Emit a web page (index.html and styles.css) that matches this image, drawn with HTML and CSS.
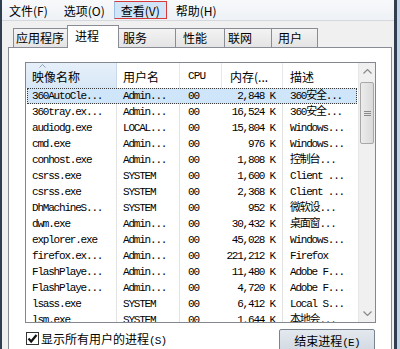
FILE: index.html
```html
<!DOCTYPE html>
<html>
<head>
<meta charset="utf-8">
<link rel="stylesheet" href="styles.css">
</head>
<body>
<div class="outer">
<div class="win">
  <div class="menubar">
    <span class="mi">文件(F)</span>
    <span class="mi">选项(O)</span>
    <span class="mi mi-hot">查看(V)</span>
    <span class="mi">帮助(H)</span>
  </div>
  <div class="tabs">
    <div class="tab t1">应用程序</div>
    <div class="tab t2 sel">进程</div>
    <div class="tab t3">服务</div>
    <div class="tab t4">性能</div>
    <div class="tab t5">联网</div>
    <div class="tab t6">用户</div>
  </div>
  <div class="panel">
    <div class="list">
      <div class="lv">
        <div class="hdr">
          <div class="hc c-name sorted"><svg class="sort" width="7" height="4" viewBox="0 0 7 4"><path d="M0.5 3.5 L3.5 0.5 L6.5 3.5" fill="none" stroke="#8fa3b8" stroke-width="1"/></svg>映像名称</div>
          <div class="hc c-user">用户名</div>
          <div class="hc c-cpu">CPU</div>
          <div class="hc c-mem">内存(...</div>
          <div class="hc c-desc">描述</div>
        </div>
        <div class="row selrow"><div class="c c-name">360AutoCle...</div><div class="c c-user">Admin...</div><div class="c c-cpu">00</div><div class="c c-mem">2,848 K</div><div class="c c-desc">360安全...</div></div>
        <div class="row"><div class="c c-name">360tray.ex...</div><div class="c c-user">Admin...</div><div class="c c-cpu">00</div><div class="c c-mem">16,524 K</div><div class="c c-desc">360安全...</div></div>
        <div class="row"><div class="c c-name">audiodg.exe</div><div class="c c-user">LOCAL...</div><div class="c c-cpu">00</div><div class="c c-mem">15,804 K</div><div class="c c-desc">Windows...</div></div>
        <div class="row"><div class="c c-name">cmd.exe</div><div class="c c-user">Admin...</div><div class="c c-cpu">00</div><div class="c c-mem">976 K</div><div class="c c-desc">Windows...</div></div>
        <div class="row"><div class="c c-name">conhost.exe</div><div class="c c-user">Admin...</div><div class="c c-cpu">00</div><div class="c c-mem">1,808 K</div><div class="c c-desc">控制台...</div></div>
        <div class="row"><div class="c c-name">csrss.exe</div><div class="c c-user">SYSTEM</div><div class="c c-cpu">00</div><div class="c c-mem">1,600 K</div><div class="c c-desc">Client ...</div></div>
        <div class="row"><div class="c c-name">csrss.exe</div><div class="c c-user">SYSTEM</div><div class="c c-cpu">00</div><div class="c c-mem">2,368 K</div><div class="c c-desc">Client ...</div></div>
        <div class="row"><div class="c c-name">DhMachineS...</div><div class="c c-user">SYSTEM</div><div class="c c-cpu">00</div><div class="c c-mem">952 K</div><div class="c c-desc">微软设...</div></div>
        <div class="row"><div class="c c-name">dwm.exe</div><div class="c c-user">Admin...</div><div class="c c-cpu">00</div><div class="c c-mem">30,432 K</div><div class="c c-desc">桌面窗...</div></div>
        <div class="row"><div class="c c-name">explorer.exe</div><div class="c c-user">Admin...</div><div class="c c-cpu">00</div><div class="c c-mem">45,028 K</div><div class="c c-desc">Windows...</div></div>
        <div class="row"><div class="c c-name">firefox.ex...</div><div class="c c-user">Admin...</div><div class="c c-cpu">00</div><div class="c c-mem">221,212 K</div><div class="c c-desc">Firefox</div></div>
        <div class="row"><div class="c c-name">FlashPlaye...</div><div class="c c-user">Admin...</div><div class="c c-cpu">00</div><div class="c c-mem">11,480 K</div><div class="c c-desc">Adobe F...</div></div>
        <div class="row"><div class="c c-name">FlashPlaye...</div><div class="c c-user">Admin...</div><div class="c c-cpu">00</div><div class="c c-mem">4,720 K</div><div class="c c-desc">Adobe F...</div></div>
        <div class="row"><div class="c c-name">lsass.exe</div><div class="c c-user">SYSTEM</div><div class="c c-cpu">00</div><div class="c c-mem">6,412 K</div><div class="c c-desc">Local S...</div></div>
        <div class="row"><div class="c c-name">lsm.exe</div><div class="c c-user">SYSTEM</div><div class="c c-cpu">00</div><div class="c c-mem">1,644 K</div><div class="c c-desc">本地会...</div></div>
      </div>
      <div class="vs">
        <div class="vs-btn"><svg width="9" height="5" viewBox="0 0 9 5"><path d="M0.5 4.5 L4.5 0.5 L8.5 4.5" fill="none" stroke="#8a8a8a" stroke-width="1.2"/></svg></div>
        <div class="vs-track">
          <div class="vs-thumb"><svg width="7" height="7" viewBox="0 0 7 7"><path d="M0 1.5 H7 M0 3.5 H7 M0 5.5 H7" stroke="#8a8a8a" stroke-width="1"/></svg></div>
        </div>
        <div class="vs-btn"><svg width="9" height="5" viewBox="0 0 9 5"><path d="M0.5 0.5 L4.5 4.5 L8.5 0.5" fill="none" stroke="#8a8a8a" stroke-width="1.2"/></svg></div>
      </div>
    </div>
    <div class="bottom">
      <div class="chk">
        <span class="box"><svg width="11" height="11" viewBox="0 0 11 11"><path d="M1.5 5.5 L4.2 8.5 L9.5 2" fill="none" stroke="#111" stroke-width="2.2"/></svg></span>
        <span class="chk-label">显示所有用户的进程<span class="mono">(S)</span></span>
      </div>
      <div class="btn">结束进程<span class="mono">(E)</span></div>
    </div>
  </div>
</div>
</div>
</body>
</html>
```

FILE: styles.css
```css
* { box-sizing: border-box; }
html, body { margin: 0; padding: 0; }
body {
  width: 400px;
  height: 349px;
  overflow: hidden;
  background: #f0f0f0;
  font-family: "Noto Sans CJK SC", "Noto Sans", sans-serif;
  font-size: 12px;
  color: #000;
}
.outer {
  height: 349px;
  border-right: 3px solid #c3d4e6;
}
.win {
  height: 349px;
  border-left: 2px solid #2f3f50;
  border-right: 3px solid #2f3f50;
  background: #f0f0f0;
  overflow: hidden;
}
.menubar {
  height: 21px;
  display: flex;
  gap: 2px;
  background: linear-gradient(#f8f9fb, #eef1f5);
  border-bottom: 1px solid #d5d9de;
}
.mi {
  height: 18px;
  margin-top: 1px;
  padding: 0 6px;
  line-height: 17px;
  border: 1px solid transparent;
  white-space: nowrap;
}
.mi-hot {
  background: #d2e5f8;
  border-color: #d8393a;
  border-left-color: #9cc0e4;
}
.tabs {
  display: flex;
  align-items: flex-end;
  height: 22px;
  margin-top: 4px;
  padding-left: 11px;
}
.tab {
  height: 19px;
  border: 1px solid #898c95;
  border-bottom: none;
  margin-right: -1px;
  background: linear-gradient(#f3f3f3, #e4e4e4);
  line-height: 18px;
  white-space: nowrap;
}
.tab.sel {
  position: relative;
  z-index: 1;
  height: 23px;
  margin-bottom: -1px;
  margin-left: -1px;
  margin-right: -2px;
  background: #fff;
  line-height: 19px;
}
.t1 { width: 56px; padding-left: 2px; }
.t2 { width: 52px; padding-left: 7px; }
.t3 { width: 59px; padding-left: 5px; }
.t4 { width: 50px; padding-left: 7px; }
.t5 { width: 48px; padding-left: 3px; }
.t6 { width: 47px; padding-left: 6px; }
.panel {
  margin-left: 6px;
  width: 384px;
  height: 330px;
  border: 1px solid #898c95;
  background: #fff;
  padding: 14px 0 0 16px;
}
.list {
  width: 351px;
  height: 261px;
  border: 1px solid #828790;
  display: flex;
  background: #fff;
}
.lv {
  width: 332px;
  height: 259px;
  overflow: hidden;
}
.hdr {
  display: flex;
  height: 25px;
}
.hc {
  position: relative;
  height: 25px;
  line-height: 25px;
  padding-top: 1px;
  white-space: nowrap;
  border-right: 1px solid #e5e8ec;
}
.hc.sorted {
  background: linear-gradient(#e6f0fa, #d8e7f6);
  border-right-color: #c9d8e8;
}
.sort {
  position: absolute;
  left: 13px;
  top: 1px;
}
.c-name { width: 91px; padding-left: 6px; }
.c-user { width: 63px; padding-left: 6px; }
.c-cpu { width: 42px; padding-left: 8px; }
.c-mem { width: 61px; padding-left: 8px; }
.c-desc { width: 75px; padding-left: 7px; border-right: none; }
.hc.c-cpu { font-family: "Liberation Mono", monospace; font-size: 11px; letter-spacing: -0.8px; }
.row {
  display: flex;
  height: 16px;
  font-family: "Liberation Mono", "Noto Sans CJK SC", monospace;
  font-size: 11px;
  letter-spacing: -1.2px;
  line-height: 16px;
}
.row .c {
  white-space: nowrap;
  overflow: hidden;
}
.row .c-name { border-right: 1px solid #e3e3e3; }
.row .c-user { border-right: 1px solid #e3e3e3; }
.row .c-mem { border-right: 1px solid #e3e3e3; text-align: right; padding-left: 0; padding-right: 7px; }
.row .c-desc { padding-left: 7px; }
.selrow {
  margin-left: 1px;
  width: 330px;
  background: #cfe6fa;
  outline: 1px dotted #3a3a3a;
  outline-offset: -1px;
}
.selrow .c-name { width: 90px; padding-left: 5px; border-right-color: transparent; }
.selrow .c-user, .selrow .c-mem { border-right-color: transparent; }
.selrow .c-desc { width: 74px; }
.vs {
  width: 17px;
  height: 259px;
  display: flex;
  flex-direction: column;
  background: #f0f0f0;
  border-left: 1px solid #e6e6e6;
}
.vs-btn {
  height: 17px;
  display: flex;
  align-items: center;
  justify-content: center;
}
.vs-track {
  flex: 1;
}
.vs-thumb {
  margin: 2px 1px 0 1px;
  height: 62px;
  border: 1px solid #a8a8a8;
  border-radius: 2px;
  background: linear-gradient(90deg, #ececec, #dadada);
  display: flex;
  align-items: center;
  justify-content: center;
}
.bottom {
  width: 351px;
  margin-top: 6px;
  display: flex;
  justify-content: space-between;
  align-items: flex-start;
}
.chk {
  display: flex;
  align-items: center;
  margin-left: 1px;
  margin-top: 1px;
  white-space: nowrap;
}
.box {
  width: 13px;
  height: 13px;
  border: 1px solid #333;
  background: #fff;
  display: flex;
  align-items: center;
  justify-content: center;
  margin-right: 2px;
}
.mono {
  font-family: "Liberation Mono", monospace;
  font-size: 11px;
  letter-spacing: -0.8px;
}
.btn {
  width: 96px;
  height: 22px;
  margin-right: 1px;
  border: 1px solid #7a8490;
  border-radius: 2px;
  background: linear-gradient(#e4e9ef, #d3dae2);
  text-align: center;
  line-height: 21px;
  white-space: nowrap;
}
```
